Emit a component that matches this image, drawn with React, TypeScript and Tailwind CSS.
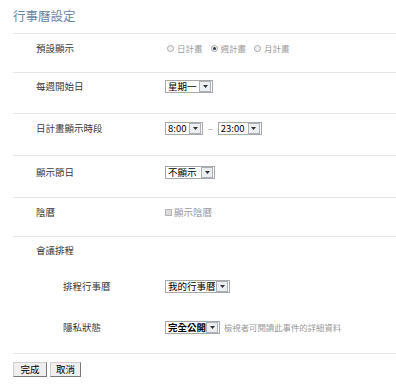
import React from 'react';

const FONT = { fontFamily: '"Noto Sans CJK TC", "Liberation Sans", sans-serif' };

const Arrow: React.FC = () => (
  <span className="flex h-[11px] w-[12px] items-center justify-center border border-[#a9b0b8] bg-[#eceef0]">
    <svg width="5" height="3" viewBox="0 0 5 3">
      <path d="M0 0 L5 0 L2.5 3 Z" fill="#333" />
    </svg>
  </span>
);

const Select: React.FC<{ value: string; width: string; bold?: boolean }> = ({ value, width, bold }) => (
  <span className={`inline-flex h-[13px] items-center justify-between border border-[#a8a8a8] bg-white pl-[2px] pr-[1px] ${width}`}>
    <span className={`text-[9.5px] leading-[11px] text-black ${bold ? 'font-bold' : ''}`}>{value}</span>
    <Arrow />
  </span>
);

const Radio: React.FC<{ checked?: boolean; label: string }> = ({ checked, label }) => (
  <span className="inline-flex items-center gap-[3px]">
    <span className="flex h-[7px] w-[7px] items-center justify-center rounded-full border border-[#a9a9a9] bg-[#f2f2f2]">
      {checked && <span className="h-[3px] w-[3px] rounded-full bg-[#2f3a48]" />}
    </span>
    <span className="text-[8.5px] leading-[13px] text-[#9a9a9a]">{label}</span>
  </span>
);

const Row: React.FC<{ label: string; h: string; pt: string; children?: React.ReactNode }> = ({ label, h, pt, children }) => (
  <div className={`flex border-t border-[#e6e6e6] ${h} ${pt}`}>
    <div className="w-[152px] shrink-0 pl-[23px] text-[9.5px] leading-[13px] text-[#3a3a3a]">{label}</div>
    <div className="flex h-[13px] items-center">{children}</div>
  </div>
);

const SubRow: React.FC<{ label: string; mt: string; children?: React.ReactNode }> = ({ label, mt, children }) => (
  <div className={`flex ${mt}`}>
    <div className="w-[152px] shrink-0 pl-[50px] text-[9.5px] leading-[13px] text-[#3a3a3a]">{label}</div>
    <div className="flex h-[13px] items-center">{children}</div>
  </div>
);

export default function App() {
  return (
    <div className="h-[387px] w-[396px] overflow-hidden bg-white pl-[13px]" style={FONT}>
      <div className="h-[33px] pt-[9px] text-[12.5px] leading-[13px] text-[#6a86a3]">行事曆設定</div>

      <Row label="預設顯示" h="h-[39px]" pt="pt-[8px]">
        <div className="flex items-center gap-[8px] pl-[2px]">
          <Radio label="日計畫" />
          <Radio label="週計畫" checked />
          <Radio label="月計畫" />
        </div>
      </Row>

      <Row label="每週開始日" h="h-[41px]" pt="pt-[7px]">
        <Select value="星期一" width="w-[48px]" />
      </Row>

      <Row label="日計畫顯示時段" h="h-[42px]" pt="pt-[8px]">
        <Select value="8:00" width="w-[38px]" />
        <span className="mx-[5px] text-[9px] text-[#999]">–</span>
        <Select value="23:00" width="w-[44px]" />
      </Row>

      <Row label="顯示節日" h="h-[42px]" pt="pt-[10px]">
        <Select value="不顯示" width="w-[50px]" />
      </Row>

      <Row label="陰曆" h="h-[39px]" pt="pt-[8px]">
        <span className="inline-flex items-center gap-[2px]">
          <span className="h-[7px] w-[7px] border border-[#b5b5b5] bg-[#dcdcdc]" />
          <span className="text-[9.5px] leading-[13px] text-[#9a9a9a]">顯示陰曆</span>
        </span>
      </Row>

      <div className="h-[117px] border-t border-[#e6e6e6] pt-[7px]">
        <div className="pl-[23px] text-[9.5px] leading-[13px] text-[#3a3a3a]">會議排程</div>
        <SubRow label="排程行事曆" mt="mt-[23px]">
          <Select value="我的行事曆" width="w-[65px]" />
        </SubRow>
        <SubRow label="隱私狀態" mt="mt-[28px]">
          <Select value="完全公開" width="w-[55px]" bold />
          <span className="ml-[4px] text-[8.4px] leading-[13px] text-[#9a9a9a]">檢視者可閱讀此事件的詳細資料</span>
        </SubRow>
      </div>

      <div className="flex gap-[3px] border-t border-[#e6e6e6] pt-[8px]">
        <button className="flex h-[15px] w-[34px] items-center justify-center border border-t-[#d0d0d0] border-l-[#d0d0d0] border-b-[#7a7a7a] border-r-[#7a7a7a] bg-[#efefef] text-[9.5px] leading-[11px] text-black">完成</button>
        <button className="flex h-[15px] w-[31px] items-center justify-center border border-t-[#d0d0d0] border-l-[#d0d0d0] border-b-[#7a7a7a] border-r-[#7a7a7a] bg-[#efefef] text-[9.5px] leading-[11px] text-black">取消</button>
      </div>
    </div>
  );
}
